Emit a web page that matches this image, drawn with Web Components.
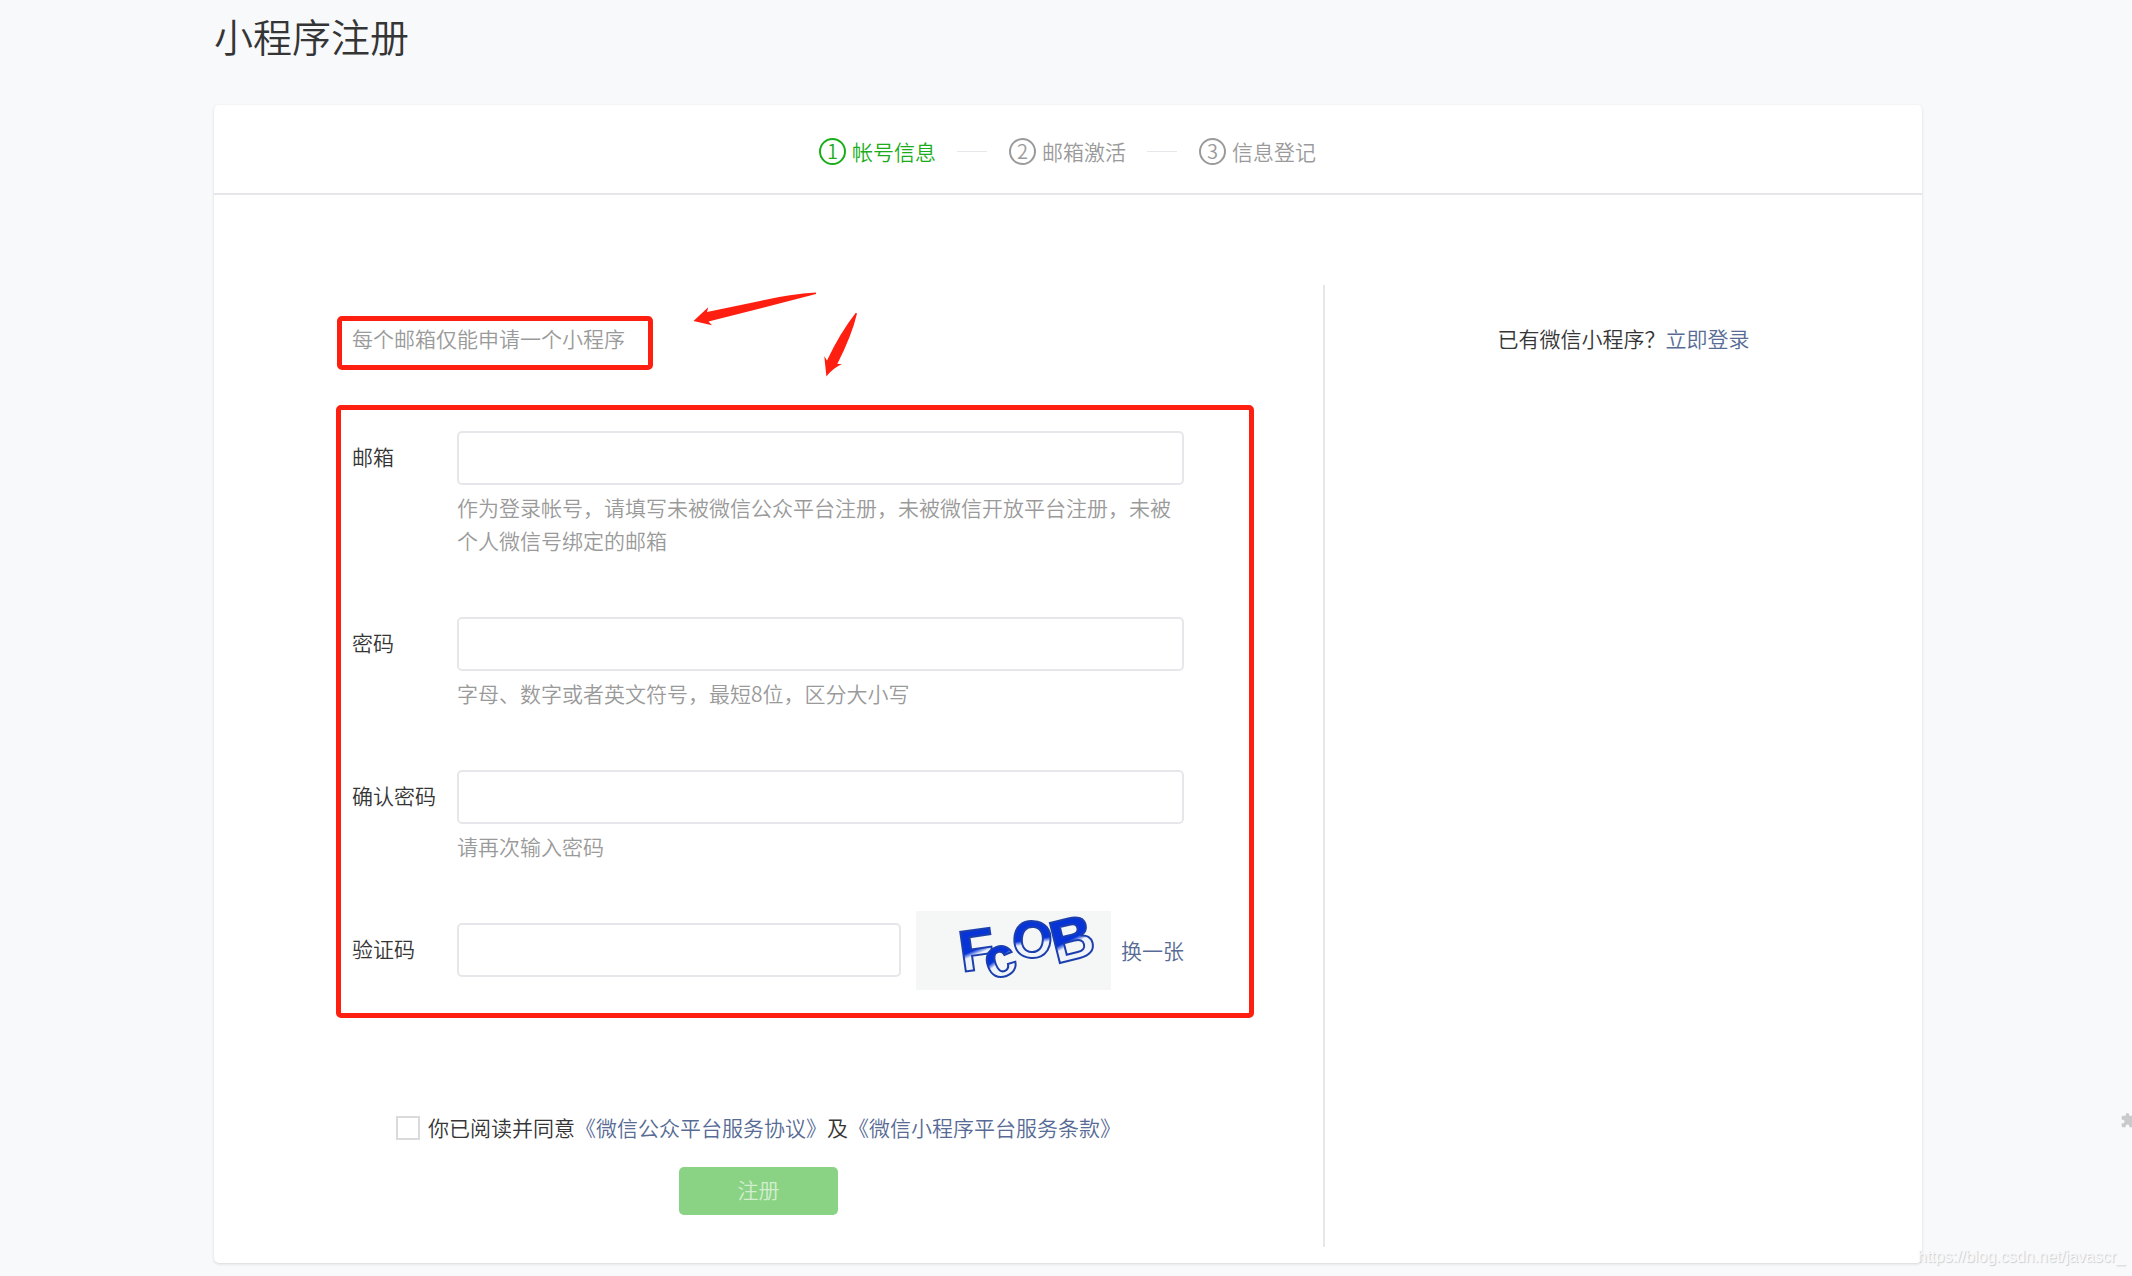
<!DOCTYPE html>
<html lang="zh-CN">
<head>
<meta charset="utf-8">
<title>小程序注册</title>
<style>
html{--line:#e7e7eb;--ink:#353535;--muted:#9a9a9a;--link:#576b95;--green:#1aad19;--mark:#ff1f10}
body{margin:0;background:#f8f9fb;color:var(--ink);font:350 21px/33px "Noto Sans CJK SC",sans-serif;overflow-x:hidden}
</style>
</head>
<body>
<register-page></register-page>
<script>
function define(name, markup, setup) {
  const tpl = document.createElement('template');
  tpl.innerHTML = markup;
  customElements.define(name, class extends HTMLElement {
    connectedCallback() {
      if (this.shadowRoot) return;
      this.attachShadow({mode: 'open'}).append(tpl.content.cloneNode(true));
      if (setup) setup(this, this.shadowRoot);
    }
  });
}

define('text-link', `<style>:host{display:inline}a{color:var(--link);text-decoration:none}</style><a href="#"><slot></slot></a>`);

define('step-item', `
<style>
:host{display:flex;align-items:center;gap:6px;color:var(--muted)}
:host([current]){color:var(--green)}
b{box-sizing:border-box;width:27px;height:27px;border:2px solid currentColor;border-radius:50%;
font-weight:inherit;font-size:20px;line-height:22px;text-align:center}
</style>
<b></b><span><slot></slot></span>`, (el, root) => {
  root.querySelector('b').textContent = el.getAttribute('no');
});

define('step-bar', `
<style>
:host{display:flex;justify-content:center;align-items:center;box-sizing:border-box;height:90px;padding:5px 1px 0 0;border-bottom:2px solid var(--line)}
i{width:30px;height:1px;margin:0 22px 0 21px;background:var(--line)}
</style>
<step-item no="1" current>帐号信息</step-item><i></i>
<step-item no="2">邮箱激活</step-item><i></i>
<step-item no="3">信息登记</step-item>`);

define('form-field', `
<style>
:host{display:grid;grid-template-columns:105px minmax(0,1fr)}
label{line-height:50px}
.row{display:flex;align-items:center;height:54px}
input{box-sizing:border-box;flex:1;min-width:0;height:54px;padding:0 14px;border:2px solid var(--line);border-radius:5px;background:#fff;font:inherit;color:inherit;outline:none}
.hint{margin:6px 0 2px;color:var(--muted)}
.hint:empty{display:none}
</style>
<label for="box"></label>
<div><div class="row"><input id="box"><slot></slot></div><div class="hint"></div></div>`, (el, root) => {
  root.querySelector('label').textContent = el.getAttribute('label');
  root.querySelector('input').type = el.getAttribute('type') || 'text';
  root.querySelector('.hint').textContent = el.getAttribute('hint') || '';
});

define('captcha-image', `
<style>:host{display:block;width:195px;height:79px;margin:-12px 10px -12px 15px}svg{display:block;overflow:visible}</style>
<svg width="195" height="79" viewBox="0 0 195 79" font-family="Liberation Sans,sans-serif" font-weight="700" fill="url(#g)" stroke="#1c3fae" stroke-width="2">
<defs><linearGradient id="g" x1="0" y1="0" x2="0.15" y2="1">
<stop offset="0" stop-color="#0634d8"/><stop offset=".56" stop-color="#0634d8"/><stop offset=".64" stop-color="#eef2fa"/><stop offset="1" stop-color="#f4f6f8"/>
</linearGradient></defs>
<rect width="195" height="79" fill="#f5f7f6" stroke="none"/>
<text transform="translate(46 61) rotate(-8)" font-size="58">F</text>
<text transform="translate(75 70) rotate(-20)" font-size="56">c</text>
<text transform="translate(95 45) rotate(4)" font-size="52">O</text>
<text transform="translate(140 53) rotate(-14)" font-size="60">B</text>
</svg>`);

define('agree-box', `
<style>
:host{display:flex;align-items:center;gap:8px}
input{appearance:none;box-sizing:border-box;width:24px;height:24px;margin:0;border:2px solid #d9dadc;background:#fff}
</style>
<input type="checkbox" id="ok"><label for="ok"><slot></slot></label>`);

define('submit-button', `
<style>
:host{display:block}
button{display:block;width:159px;height:48px;margin:0 auto;padding:0 0 3px;border:0;border-radius:5px;background:#8ad385;color:#d3eecf;font:inherit}
</style>
<button type="button"><slot></slot></button>`);

define('marked-area', `
<style>
:host{display:block;position:relative}
:host([inline]){width:max-content}
.frame{position:absolute;inset:-26px -70px -41px -16px;border:5px solid var(--mark);border-radius:5px;pointer-events:none}
:host([inline]) .frame{inset:-6px -28px -15px -15px}
</style>
<slot></slot><div class="frame"></div>`);

define('hand-arrows', `
<style>:host{display:block;position:absolute;left:340px;top:-31px;pointer-events:none}svg{display:block}</style>
<svg width="170" height="90" viewBox="692 291 170 90" fill="#ff1f10">
<path d="M693.5 321 708.2 307.3 707 312 760 301Q790 294 816 292.6L816 294 760 308.5 708.5 321.5 712 325.3Z"/>
<path d="M826.4 376.5 824.3 356.3 827 360.5Q840 333 855.8 312.8L857 313.5Q852 335 837.3 364L842 364Q833 368 826.4 376.5Z"/>
</svg>`);

define('sign-up-form', `
<style>
:host{display:block;padding:37px 139px 32px 138px}
.notice{position:relative;color:var(--muted)}
.fields{display:grid;gap:58px;margin-top:76px}
.tools{display:grid;justify-content:center;gap:23px;margin-top:134px;padding-right:19px}
</style>
<form>
<div class="notice"><marked-area inline>每个邮箱仅能申请一个小程序</marked-area><hand-arrows></hand-arrows></div>
<marked-area><div class="fields">
<form-field label="邮箱" type="email" hint="作为登录帐号，请填写未被微信公众平台注册，未被微信开放平台注册，未被个人微信号绑定的邮箱"></form-field>
<form-field label="密码" type="password" hint="字母、数字或者英文符号，最短8位，区分大小写"></form-field>
<form-field label="确认密码" type="password" hint="请再次输入密码"></form-field>
<form-field label="验证码"><captcha-image></captcha-image><text-link>换一张</text-link></form-field>
</div></marked-area>
<div class="tools">
<agree-box>你已阅读并同意<text-link>《微信公众平台服务协议》</text-link>及<text-link>《微信小程序平台服务条款》</text-link></agree-box>
<submit-button>注册</submit-button>
</div>
</form>`);

define('side-tool', `
<style>:host{display:block;position:absolute;right:0;top:1113px;width:11px;height:15px;overflow:hidden}svg{display:block}</style>
<svg width="15" height="15" viewBox="1 1 22 22" fill="#c9cacc"><path d="M20.5 11H19V7c0-1.100-.9-2-2-2h-4V3.500C13 2.120 11.880 1 10.500 1S8 2.120 8 3.500V5H4c-1.100 0-2 .9-2 2v3.800h1.500c1.500 0 2.700 1.200 2.700 2.700S5 16.200 3.500 16.200H2V20c0 1.100.9 2 2 2h3.800v-1.500c0-1.500 1.200-2.700 2.700-2.700s2.700 1.200 2.700 2.700V22H17c1.100 0 2-.9 2-2v-4h1.500c1.380 0 2.500-1.120 2.500-2.500S21.880 11 20.500 11z"/></svg>`);

define('water-mark', `
<style>:host{display:block;position:absolute;right:7px;top:1247px;font:400 16px/20px "Liberation Sans",sans-serif;color:#f9fafb;text-shadow:1px 1px 1px #c9cbce}</style>
<slot></slot>`);

define('register-page', `
<style>
:host{display:block;position:relative;padding:6px 210px 13px 214px}
h1{margin:0 0 41px;font-size:39px;font-weight:inherit;line-height:58px}
.card{background:#fff;border-radius:5px;box-shadow:0 1px 3px rgba(0,0,0,.14)}
.body{display:grid;grid-template-columns:minmax(0,1fr) 597px;padding:90px 0 16px}
sign-up-form{border-right:2px solid var(--line)}
aside{padding-top:37px;text-align:center}
</style>
<h1>小程序注册</h1>
<div class="card">
<step-bar></step-bar>
<div class="body"><sign-up-form></sign-up-form><aside>已有微信小程序？<text-link>立即登录</text-link></aside></div>
</div>
<side-tool></side-tool>
<water-mark>https://blog.csdn.net/javascr_</water-mark>`);
</script>
</body>
</html>
